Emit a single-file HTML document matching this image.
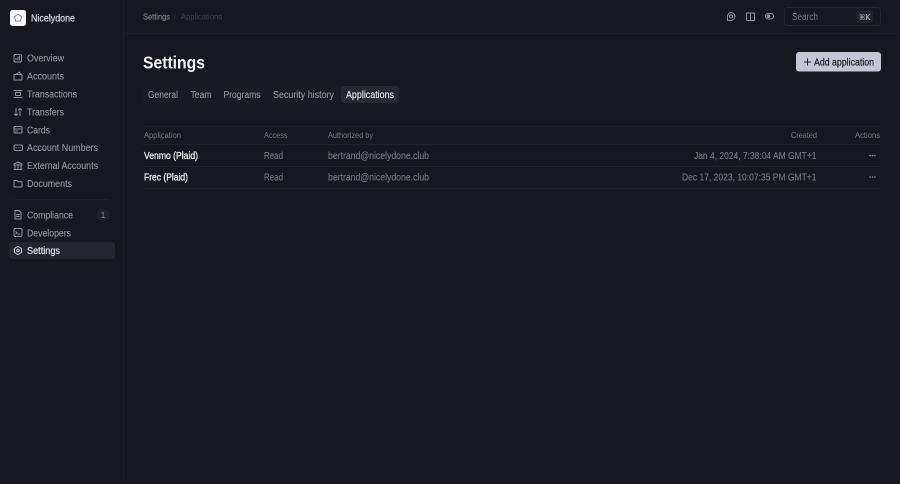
<!DOCTYPE html>
<html>
<head>
<meta charset="utf-8">
<style>
html,body{margin:0;padding:0;width:900px;height:484px;overflow:hidden;background:#16171f}
svg{display:block}
text{font-family:"Liberation Sans",sans-serif;white-space:pre}
.n{font-size:10px;fill:#9093a3;stroke:#9093a3;stroke-width:.12px}
.s{font-size:8px;fill:#73768a}
.t{font-size:10px;fill:#9093a3;stroke:#9093a3;stroke-width:.12px}
.r{font-size:10px;fill:#75788a;stroke:#75788a;stroke-width:.1px}
.m{font-size:10px;fill:#eceded;stroke:#eceded;stroke-width:.3px}
.i{fill:none;stroke:#8e91a0;stroke-width:1;stroke-linecap:round;stroke-linejoin:round}
</style>
</head>
<body>
<svg width="900" height="484" viewBox="0 0 900 484" xmlns="http://www.w3.org/2000/svg">
<rect width="900" height="484" fill="#16171f"/>
<rect x="123" y="0" width="1" height="484" fill="#1d1e27"/>
<rect x="124" y="33" width="776" height="1" fill="#1d1e27"/>

<!-- logo -->
<rect x="10" y="10" width="16" height="16" rx="2.5" fill="#f7f7f8"/>
<path d="M18 14.200l3.600 2.600-1.400 4.300h-4.400l-1.400-4.300z" fill="none" stroke="#8a8d99" stroke-width="1"/>
<text x="31" y="21.500" font-size="10" fill="#d4d5dc" stroke="#d4d5dc" stroke-width=".25" textLength="44" lengthAdjust="spacingAndGlyphs">Nicelydone</text>

<!-- nav -->
<text class="n" x="27" y="61.700" textLength="37" lengthAdjust="spacingAndGlyphs">Overview</text>
<text class="n" x="27" y="79.600" textLength="37" lengthAdjust="spacingAndGlyphs">Accounts</text>
<text class="n" x="27" y="97.500" textLength="50" lengthAdjust="spacingAndGlyphs">Transactions</text>
<text class="n" x="27" y="115.400" textLength="37" lengthAdjust="spacingAndGlyphs">Transfers</text>
<text class="n" x="27" y="133.300" textLength="23" lengthAdjust="spacingAndGlyphs">Cards</text>
<text class="n" x="27" y="151.200" textLength="71" lengthAdjust="spacingAndGlyphs">Account Numbers</text>
<text class="n" x="27" y="169.100" textLength="71" lengthAdjust="spacingAndGlyphs">External Accounts</text>
<text class="n" x="27" y="187" textLength="45" lengthAdjust="spacingAndGlyphs">Documents</text>
<rect x="9" y="199" width="100" height="1" fill="#1d1e27"/>
<text class="n" x="27" y="218.500" textLength="46" lengthAdjust="spacingAndGlyphs">Compliance</text>
<circle cx="103" cy="215" r="6.500" fill="#1f2029"/>
<text x="103" y="218" font-size="8" fill="#9093a3" text-anchor="middle">1</text>
<text class="n" x="27" y="236.400" textLength="44" lengthAdjust="spacingAndGlyphs">Developers</text>
<rect x="9" y="242" width="106" height="17" rx="3.500" fill="#232530"/>
<text x="27" y="254" font-size="10" fill="#d8d9e0" stroke="#d8d9e0" stroke-width=".25" textLength="33" lengthAdjust="spacingAndGlyphs">Settings</text>

<!-- nav icons -->
<g class="i">
<rect x="14" y="54.500" width="7.500" height="7.500" rx="1.500"/><path d="M16 60v-1.500M17.800 60v-3M19.500 60v-4"/>
<path d="M14 74.500h8v5.500h-8zM15.500 74.500l4-2.500 1 2.500"/>
<path d="M14 90.500h8M14 97.500h8M15.500 92.500h5v3h-5z"/>
<path d="M16 108.500v7M14.500 114l1.500 1.500 1.500-1.500M20 115.500v-7M18.500 110l1.500-1.500 1.500 1.500"/>
<rect x="14" y="126.500" width="8" height="6.500" rx="1"/><path d="M14 129h8M15.500 131h2"/>
<rect x="14" y="145" width="8.500" height="5.500" rx="1.500"/><path d="M16 147.800h.2M18.200 147.800h.2M20.300 147.800h.2"/>
<path d="M14 164l4-2 4 2v1h-8zM15 165.500v3M18 165.500v3M21 165.500v3M14 169.500h8"/>
<path d="M14 180.500h3l1 1.200h4v5.300h-8z"/>
<path d="M15 210.500h4l2 2v6.500h-6zM16.500 214.500h3M16.500 216.500h3"/>
<rect x="14" y="228.500" width="8" height="8" rx="1.500"/><path d="M15.800 231.500l1.300 1.200-1.300 1.200M18 234h2"/>
</g>
<g fill="none" stroke="#d4d5dc" stroke-width="1"><path d="M18 246.500l3.500 2v4l-3.500 2-3.500-2v-4z"/><circle cx="18" cy="250.500" r="1.300"/></g>

<!-- breadcrumb -->
<text x="143" y="19.500" font-size="8" fill="#777a8c" stroke="#777a8c" stroke-width=".2" textLength="27" lengthAdjust="spacingAndGlyphs">Settings</text>
<text x="174" y="19.500" font-size="8" fill="#33353f">/</text>
<text x="181" y="19.500" font-size="8" fill="#3f414e" textLength="41" lengthAdjust="spacingAndGlyphs">Applications</text>

<!-- top right icons -->
<g fill="none" stroke="#8e91a0" stroke-width="1" stroke-linejoin="round">
<path d="M731 12.500a4 4 0 0 1 0 8h-3.500v-4a4 4 0 0 1 3.500-4z"/><circle cx="731" cy="16.500" r="1.500"/>
<path d="M746.500 13h8v7.500h-8zM750.500 13v7.500"/>
<rect x="765.500" y="13.500" width="8" height="5.500" rx="2.750"/>
</g>
<circle cx="768.500" cy="16.200" r="1.800" fill="#8e91a0"/>

<!-- search -->
<rect x="784.500" y="7.500" width="96" height="18" rx="3" fill="#16171f" stroke="#24252e"/>
<text x="792" y="20" font-size="10" fill="#767985" textLength="26" lengthAdjust="spacingAndGlyphs">Search</text>
<rect x="856" y="11" width="17" height="12" rx="2" fill="#21222b"/>
<text x="859" y="20" font-size="8" font-weight="700" fill="#9093a3" textLength="11.500" lengthAdjust="spacingAndGlyphs" style="font-family:'DejaVu Sans',sans-serif">⌘K</text>

<!-- title -->
<text x="143" y="68.500" font-size="17.500" font-weight="700" fill="#f3f3f5" textLength="62" lengthAdjust="spacingAndGlyphs">Settings</text>

<!-- button -->
<rect x="796" y="52" width="85" height="19.500" rx="3" fill="#c3c6d4"/>
<path d="M807.500 58.500v7M804 62h7" stroke="#22232c" stroke-width="1" fill="none"/>
<text x="814" y="65.500" font-size="10" fill="#22232c" stroke="#22232c" stroke-width=".25" textLength="60" lengthAdjust="spacingAndGlyphs">Add application</text>

<!-- tabs -->
<rect x="143" y="85.500" width="257" height="18" rx="3.500" fill="#191a22"/>
<rect x="341" y="86" width="58" height="17" rx="3.500" fill="#262833"/>
<text class="t" x="148" y="98.200" textLength="30" lengthAdjust="spacingAndGlyphs">General</text>
<text class="t" x="190.500" y="98.200" textLength="21" lengthAdjust="spacingAndGlyphs">Team</text>
<text class="t" x="223.500" y="98.200" textLength="37" lengthAdjust="spacingAndGlyphs">Programs</text>
<text class="t" x="273" y="98.200" textLength="61" lengthAdjust="spacingAndGlyphs">Security history</text>
<text x="346" y="98.200" font-size="10" fill="#e3e4ea" stroke="#e3e4ea" stroke-width=".15" textLength="48" lengthAdjust="spacingAndGlyphs">Applications</text>

<!-- table lines -->
<rect x="143" y="126" width="738" height="1" fill="#1c1d26"/>
<rect x="143" y="144" width="738" height="1" fill="#1f2029"/>
<rect x="143" y="166" width="738" height="1" fill="#1f2029"/>
<rect x="143" y="188" width="738" height="1" fill="#1f2029"/>

<!-- table header -->
<text class="s" x="144" y="138" textLength="37" lengthAdjust="spacingAndGlyphs">Application</text>
<text class="s" x="264" y="138" textLength="23.500" lengthAdjust="spacingAndGlyphs">Access</text>
<text class="s" x="328" y="138" textLength="45" lengthAdjust="spacingAndGlyphs">Authorized by</text>
<text class="s" x="791" y="138" textLength="26" lengthAdjust="spacingAndGlyphs">Created</text>
<text class="s" x="855" y="138" textLength="25" lengthAdjust="spacingAndGlyphs">Actions</text>

<!-- rows -->
<text class="m" x="144" y="159" textLength="54" lengthAdjust="spacingAndGlyphs">Venmo (Plaid)</text>
<text class="r" x="264" y="159" textLength="19" lengthAdjust="spacingAndGlyphs">Read</text>
<text class="r" x="328" y="159" textLength="101" lengthAdjust="spacingAndGlyphs">bertrand@nicelydone.club</text>
<text class="r" x="694" y="159" textLength="122.500" lengthAdjust="spacingAndGlyphs">Jan 4, 2024, 7:38:04 AM GMT+1</text>
<g fill="#8e91a0"><circle cx="870" cy="155.500" r=".8"/><circle cx="872.500" cy="155.500" r=".8"/><circle cx="875" cy="155.500" r=".8"/></g>

<text class="m" x="144" y="180.500" textLength="44" lengthAdjust="spacingAndGlyphs">Frec (Plaid)</text>
<text class="r" x="264" y="180.500" textLength="19" lengthAdjust="spacingAndGlyphs">Read</text>
<text class="r" x="328" y="180.500" textLength="101" lengthAdjust="spacingAndGlyphs">bertrand@nicelydone.club</text>
<text class="r" x="682" y="180.500" textLength="134.500" lengthAdjust="spacingAndGlyphs">Dec 17, 2023, 10:07:35 PM GMT+1</text>
<g fill="#8e91a0"><circle cx="870" cy="177" r=".8"/><circle cx="872.500" cy="177" r=".8"/><circle cx="875" cy="177" r=".8"/></g>
</svg>
</body>
</html>
